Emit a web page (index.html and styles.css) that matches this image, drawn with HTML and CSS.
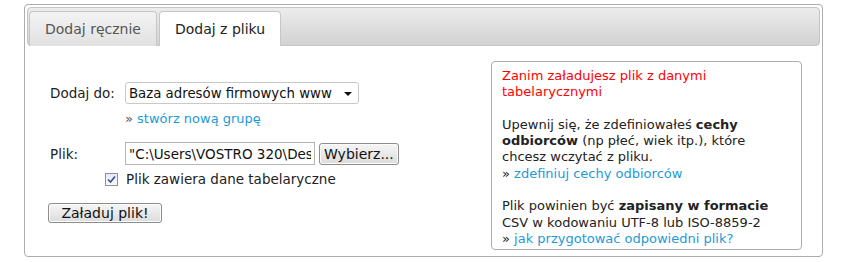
FILE: index.html
```html
<!DOCTYPE html>
<html lang="pl">
<head>
  <meta charset="UTF-8">
  <title>Dodaj z pliku</title>
  <link rel="stylesheet" href="styles.css">
</head>
<body>

<div class="panel">
  <!-- zakładki -->
  <div class="tabs-bar">
    <div class="tab">Dodaj ręcznie</div>
    <div class="tab active">Dodaj z pliku</div>
  </div>

  <div class="content">
    <div class="form">
      <div class="row">
        <span class="label">Dodaj do:</span>
        <span class="select-wrap">
          <select class="select">
            <option>Baza adresów firmowych www</option>
          </select>
        </span>
      </div>
      <div class="row sub">
        <span class="label"></span>
        <span class="more">&raquo; <a href="#">stwórz nową grupę</a></span>
      </div>

      <div class="row file-row">
        <span class="label">Plik:</span>
        <input class="file-path" type="text" value="&quot;C:\Users\VOSTRO 320\Desktop\adresy.csv&quot;" readonly>
        <button class="btn pick">Wybierz...</button>
      </div>
      <div class="row check-row">
        <span class="checkbox">
          <svg width="9" height="9" viewBox="0 0 9 9"><path d="M1 4.5 L3.5 7 L8 1.5" fill="none" stroke="#3b4f8c" stroke-width="1.6"/></svg>
        </span>
        <span>Plik zawiera dane tabelaryczne</span>
      </div>

      <button class="btn submit">Załaduj plik!</button>
    </div>

    <div class="info">
      <p class="warn">Zanim załadujesz plik z danymi<br>tabelarycznymi</p>
      <p>Upewnij się, że zdefiniowałeś <b>cechy</b><br>
        <b>odbiorców</b> (np płeć, wiek itp.), które<br>
        chcesz wczytać z pliku.<br>
        &raquo; <a href="#">zdefiniuj cechy odbiorców</a></p>
      <p>Plik powinien być <b>zapisany w formacie</b><br>
        CSV w kodowaniu UTF-8 lub ISO-8859-2<br>
        &raquo; <a href="#">jak przygotować odpowiedni plik?</a></p>
    </div>
  </div>
</div>

</body>
</html>
```

FILE: styles.css
```css
body { margin: 0; font-family: "DejaVu Sans", Verdana, sans-serif; font-size: 13.5px; color: #222; background: #fff; }
a { color: #1e9ad6; text-decoration: none; }

.panel { box-sizing: border-box; margin: 4px 0 0 24px; width: 799px; height: 253px; border: 1px solid #acacac; border-radius: 4px; padding: 2px; }

.tabs-bar { box-sizing: border-box; height: 39px; display: flex; align-items: flex-end; gap: 2px; padding-left: 1px; border: 1px solid #c4c4c4; border-radius: 4px; background: linear-gradient(#ececec, #d2d2d2); }
.tab { box-sizing: border-box; height: 35px; line-height: 34px; padding: 0 15px; margin-bottom: -1px; font-size: 14px; color: #555; border: 1px solid #c6c6c6; border-bottom: none; border-radius: 4px 4px 0 0; background: linear-gradient(#f3f3f3, #e1e1e1); }
.tab.active { background: #fff; color: #222; }

.content { display: flex; justify-content: space-between; }

.form { padding: 36px 0 0 23px; }
.row { display: flex; align-items: center; }
.label { width: 75px; }
.sub { margin-top: 6px; height: 16px; }
.more { color: #555; font-size: 13px; }

.select-wrap { position: relative; display: inline-block; }
.select-wrap::after { content: ""; position: absolute; right: 7px; top: 10px; border-left: 4px solid transparent; border-right: 4px solid transparent; border-top: 4px solid #111; pointer-events: none; }
.select { -webkit-appearance: none; appearance: none; box-sizing: border-box; width: 234px; height: 22px; padding: 0 0 0 3px; font: inherit; font-size: 13.3px; color: #111; background: #fff; border: 1px solid #c9c9c9; border-radius: 3px; }

.file-row { margin-top: 16px; }
.file-path { box-sizing: border-box; width: 190px; height: 23px; padding: 0 3px; font: inherit; font-size: 13.5px; color: #111; border: 1px solid #b5b5b5; outline: none; }
.btn { font: inherit; font-size: 14px; color: #111; border: 1px solid #8d8d8d; border-radius: 3px; background: linear-gradient(#f6f6f6, #dcdcdc); box-shadow: inset 0 0 0 1px #fcfcfc; padding: 0 4px; }
.pick { height: 22px; margin-left: 4px; }

.check-row { margin: 6px 0 0 55px; gap: 8px; }
.checkbox { box-sizing: border-box; width: 13px; height: 13px; display: flex; align-items: center; justify-content: center; border: 1px solid #8f8f9d; background: linear-gradient(#e7e9f4, #f8f9fc); }

.submit { display: block; margin: 16px 0 0 -2px; width: 114px; height: 20px; }

.info { box-sizing: border-box; width: 311px; height: 189px; margin: 15px 18px 0 0; padding: 6px 10px 0; border: 1px solid #acacac; border-radius: 4px; font-size: 13px; line-height: 16.3px; }
.info p { margin: 0 0 16.3px; }
.info .warn { color: #f00; }
```
